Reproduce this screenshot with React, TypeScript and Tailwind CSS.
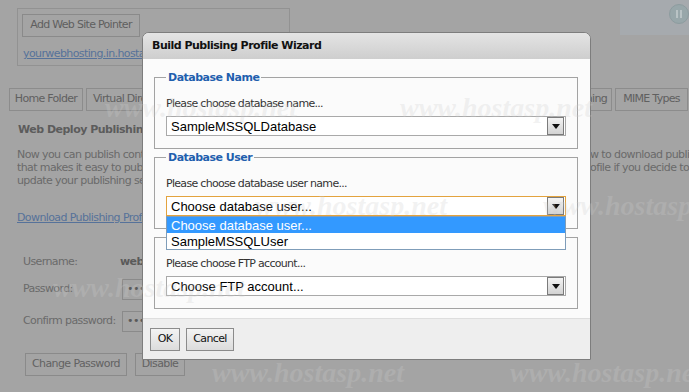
import React from 'react';

const Arrow = () => (
  <div className="w-[17px] h-[18px] mr-px border border-[#7b7b7b] bg-gradient-to-b from-[#f4f4f4] to-[#d3d3d3] flex items-center justify-center">
    <svg width="8" height="5" viewBox="0 0 8 5">
      <path d="M0 0h8L4 5z" fill="#111" />
    </svg>
  </div>
);

function Select({ value, focused }: { value: string; focused?: boolean }) {
  return (
    <div
      className={`h-[20px] flex items-center border bg-white ${
        focused ? 'border-[#e3a33e]' : 'border-[#a9a9a9]'
      }`}
    >
      <span className="flex-1 pl-[4px] font-['Liberation_Sans',sans-serif] text-[13px] text-black leading-none">
        {value}
      </span>
      <Arrow />
    </div>
  );
}

function Group({
  legend,
  label,
  children,
}: {
  legend: string;
  label: string;
  children: React.ReactNode;
}) {
  return (
    <fieldset className="border border-[#a3a3a3] pl-[11px] pr-[11px] pb-[12px]">
      <legend className="px-[2px] text-[11px] leading-[15px] font-bold tracking-[-0.5px] text-[#1f5fae]">
        {legend}
      </legend>
      <div className="mt-[12px] text-[11px] leading-[13px] text-[#333] tracking-[-0.7px]">
        {label}
      </div>
      <div className="mt-[6px] relative">{children}</div>
    </fieldset>
  );
}

const marks = [
  { x: 105, y: 92 },
  { x: 400, y: 92 },
  { x: 255, y: 190 },
  { x: 543, y: 190 },
  { x: 53, y: 272 },
  { x: 212, y: 357 },
  { x: 510, y: 357 },
];

export default function App() {
  return (
    <div className="relative w-[689px] h-[392px] overflow-hidden bg-[#a4a4a4] font-['DejaVu_Sans',sans-serif] text-[#676767]">
      {/* page behind the overlay */}
      <div className="flex items-start">
        <div className="ml-[17px] mt-[8px] w-[273px] h-[58px] border border-[#929292] pl-[4px] pt-[5px]">
          <div className="w-[118px] h-[23px] border border-[#8a8a8a] flex items-center justify-center text-[11px] tracking-[-0.7px] text-[#5f5f5f]">
            Add Web Site Pointer
          </div>
          <div className="mt-[9px] ml-px text-[11px] tracking-[-0.6px] text-[#56729a] underline whitespace-nowrap">
            yourwebhosting.in.hostasp.net
          </div>
        </div>
        <div className="ml-auto w-[69px] h-[35px] bg-[#a6aaae] flex items-start justify-end">
          <div className="mt-[4px] w-[20px] h-[20px] rounded-full bg-[#98a7aa] border border-[#8d9c9f] flex items-center justify-center gap-[2px]">
            <div className="w-[2px] h-[8px] bg-[#b9c3c5]" />
            <div className="w-[2px] h-[8px] bg-[#b9c3c5]" />
          </div>
        </div>
      </div>

      <div className="mt-[22px] flex text-[11px] tracking-[-0.7px] text-[#606060] whitespace-nowrap">
        <div className="ml-[9px] w-[74px] h-[23px] border border-[#8c8c8c] flex items-center justify-center">
          Home Folder
        </div>
        <div className="ml-[3px] w-[110px] h-[23px] border border-[#8c8c8c] flex items-center pl-[6px] overflow-hidden">
          Virtual Directories
        </div>
        <div className="ml-auto w-[100px] h-[23px] border border-[#8c8c8c] flex items-center justify-end pr-[4px]">
          Publishing
        </div>
        <div className="ml-[3px] mr-px w-[73px] h-[23px] border border-[#8c8c8c] flex items-center justify-center">
          MIME Types
        </div>
      </div>

      <div className="mt-[12px] ml-[18px] text-[11px] font-bold tracking-[-0.5px] text-[#5c5c5c] leading-[14px]">
        Web Deploy Publishing Profile
      </div>
      <div className="mt-[11px] ml-[17px] text-[11px] tracking-[-0.6px] leading-[13px] text-[#6a6a6a] whitespace-nowrap">
        <div className="flex">
          <span className="w-[573px] shrink-0 overflow-hidden">Now you can publish content using Web Deploy Publishing Profile, click below to</span>
          <span>w to download publishing</span>
        </div>
        <div className="flex">
          <span className="w-[573px] shrink-0 overflow-hidden">that makes it easy to publish your web site from Visual Studio. You should re-download pr</span>
          <span>ofile if you decide to change</span>
        </div>
        <div className="flex">
          <span className="w-[573px] shrink-0 overflow-hidden">update your publishing settings.</span>
        </div>
      </div>
      <div className="mt-[23px] ml-[17px] text-[11px] tracking-[-0.6px] text-[#56729a] underline">
        Download Publishing Profile
      </div>

      <div className="mt-[29px] ml-[23px] text-[11px] tracking-[-0.6px] text-[#6a6a6a]">
        <div className="flex items-center h-[14px]">
          <span className="w-[97px]">Username:</span>
          <span className="font-bold text-[#5a5a5a]">webuser</span>
        </div>
        <div className="mt-[9px] flex items-center h-[22px]">
          <span className="w-[99px]">Password:</span>
          <div className="w-[120px] h-[21px] border border-[#8a8a8a] pl-[4px] flex items-center text-[#5a5a5a]">•••••</div>
        </div>
        <div className="mt-[10px] flex items-center h-[22px]">
          <span className="w-[99px]">Confirm password:</span>
          <div className="w-[120px] h-[21px] border border-[#8a8a8a] pl-[4px] flex items-center text-[#5a5a5a]">•••••</div>
        </div>
      </div>
      <div className="mt-[20px] ml-[25px] flex gap-[8px] text-[11px] tracking-[-0.6px] text-[#626262]">
        <div className="w-[102px] h-[23px] border border-[#8a8a8a] flex items-center justify-center">Change Password</div>
        <div className="w-[50px] h-[23px] border border-[#8a8a8a] flex items-center justify-center">Disable</div>
      </div>

      {/* modal dialog */}
      <div className="absolute left-[142px] top-[32px] w-[449px] h-[328px] border border-[#7d7d7d] rounded-t-[7px] bg-[#fbfbfb] flex flex-col overflow-hidden">
        <div className="h-[26px] shrink-0 bg-gradient-to-b from-[#e4e4e4] to-[#cecece] pl-[9px] flex items-center text-[11px] font-bold tracking-[-0.5px] text-[#111]">
          Build Publising Profile Wizard
        </div>
        <div className="pt-[11px] pl-[11px] pr-[12px] flex-1 flex flex-col gap-[1px]">
          <Group legend="Database Name" label="Please choose database name...">
            <Select value="SampleMSSQLDatabase" />
          </Group>
          <Group legend="Database User" label="Please choose database user name...">
            <Select value="Choose database user..." focused />
            <div className="absolute left-0 right-0 top-[20px] z-10 border border-[#7f9db9] bg-white font-['Liberation_Sans',sans-serif] text-[13px] leading-none">
              <div className="h-[16px] bg-[#3399ff] text-white pl-[4px] flex items-center">Choose database user...</div>
              <div className="h-[16px] text-black pl-[4px] flex items-center">SampleMSSQLUser</div>
            </div>
          </Group>
          <Group legend="FTP Account" label="Please choose FTP account...">
            <Select value="Choose FTP account..." />
          </Group>
        </div>
        <div className="h-[41px] shrink-0 bg-[#eeeeee] border-t border-[#dedede] pl-[7px] pt-[9px] flex gap-[6px] text-[11px] tracking-[-0.6px] text-[#111]">
          <div className="w-[30px] h-[23px] border border-[#8b8b8b] bg-gradient-to-b from-[#f3f3f3] to-[#dcdcdc] flex items-center justify-center">OK</div>
          <div className="w-[48px] h-[23px] border border-[#8b8b8b] bg-gradient-to-b from-[#f3f3f3] to-[#dcdcdc] flex items-center justify-center">Cancel</div>
        </div>
      </div>

      {/* watermark */}
      {marks.map((m, i) => (
        <div
          key={i}
          className="absolute pointer-events-none font-['Liberation_Serif',serif] italic font-bold text-[28px] leading-[32px] text-[rgba(205,205,205,0.26)] whitespace-nowrap"
          style={{ left: m.x, top: m.y }}
        >
          www.hostasp.net
        </div>
      ))}
    </div>
  );
}
